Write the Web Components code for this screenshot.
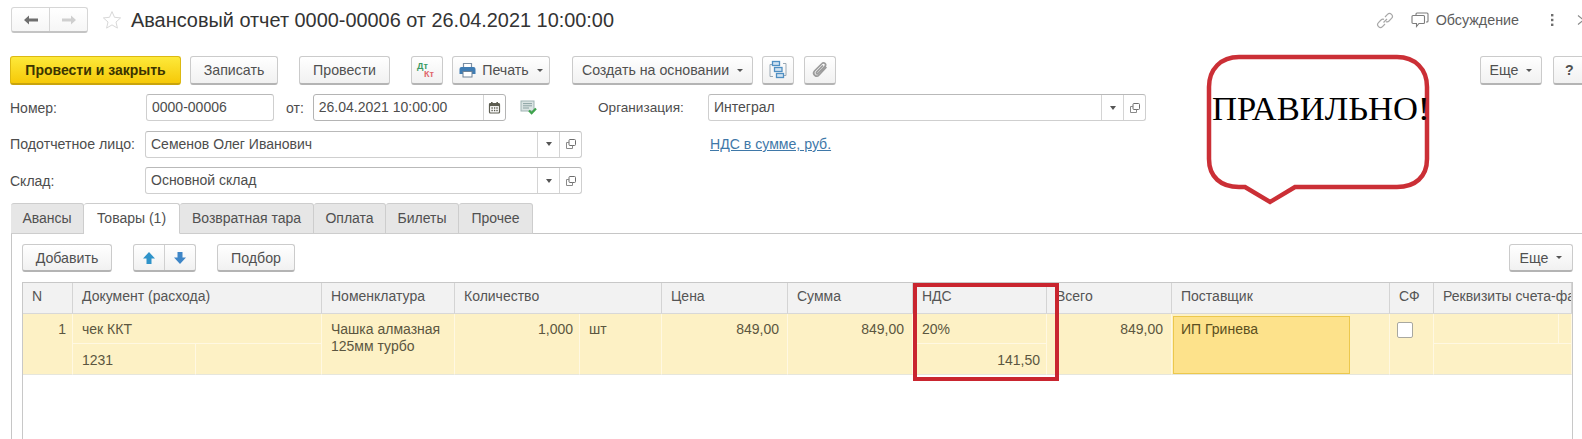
<!DOCTYPE html>
<html lang="ru">
<head>
<meta charset="utf-8">
<title>Авансовый отчет</title>
<style>
html, body { margin: 0; background: #fff; }
body { font-family: "Liberation Sans", Arial, sans-serif; font-size: 13.6px; color: #4d4d4d; }
</style>
</head>
<body>
<doc-page></doc-page>

<script>
const ICONS = {
    back: '<svg width="18" height="12" viewBox="0 0 18 12"><path d="M7 1.5 2 6l5 4.5V7.6h9V4.4H7z" fill="#6e6e6e"/></svg>',
    forward: '<svg width="18" height="12" viewBox="0 0 18 12"><path d="M11 1.5 16 6l-5 4.5V7.6H2V4.4h9z" fill="#cfcfcf"/></svg>',
    star: '<svg width="20" height="20" viewBox="0 0 20 20"><path d="M10 1.6l2.5 5.7 6.1.6-4.6 4.1 1.4 6.1L10 14.9l-5.4 3.2L6 12 1.4 7.9l6.1-.6z" fill="none" stroke="#d8d8d8" stroke-width="1"/></svg>',
    printer: '<svg width="17" height="16" viewBox="0 0 17 16"><path d="M4.5 5V1.5h8V5" fill="#fff" stroke="#7a8ea3" stroke-width="1.2"/><path d="M2.5 5h12a2 2 0 0 1 2 2v5h-16V7a2 2 0 0 1 2-2z" fill="#3f7cb3"/><rect x="4" y="9.5" width="9" height="5.5" fill="#fff" stroke="#6f8296"/></svg>',
    calendar: '<svg width="13" height="13" viewBox="0 0 13 13"><rect x="1.5" y="2.5" width="10" height="9.5" rx="1" fill="#fff" stroke="#5c5c50" stroke-width="1.2"/><rect x="1.5" y="2.5" width="10" height="2.6" fill="#5c5c50"/><rect x="3" y="1" width="1.6" height="2.4" fill="#5c5c50"/><rect x="8.4" y="1" width="1.6" height="2.4" fill="#5c5c50"/><path d="M3.4 7h1.4M5.9 7h1.4M8.3 7h1.4M3.4 9.5h1.4M5.9 9.5h1.4M8.3 9.5h1.4" stroke="#5c5c50" stroke-width="1.3"/></svg>',
    posted: '<svg width="17" height="15" viewBox="0 0 17 15"><rect x="1" y="1" width="13" height="10" fill="#dbe4e3" stroke="#9fb3b3"/><path d="M3 3.6h9M3 5.8h9M3 8h6" stroke="#8ca3a3"/><path d="M9 10.5l2.6 2.6L16 8.4" fill="none" stroke="#3fa34d" stroke-width="2.2"/></svg>',
    structure: '<svg width="18" height="20" viewBox="0 0 18 20"><path d="M3 4.500H1v12h3M14 3.500h3v12h-2" fill="none" stroke="#9aa9b5"/><rect x="3.500" y="1.500" width="7" height="4" fill="#cfe2f1" stroke="#4f8fc2" stroke-width="1.300"/><rect x="5.500" y="7.500" width="7.500" height="4" fill="#cfe2f1" stroke="#4f8fc2" stroke-width="1.300"/><rect x="7.500" y="13.500" width="7" height="4" fill="#cfe2f1" stroke="#4f8fc2" stroke-width="1.300"/></svg>',
    clip: '<svg width="18" height="18" viewBox="0 0 18 18"><path d="M15 6.5 8 14a3 3 0 0 1-4.5-4L11 2.500a2 2 0 0 1 3 2.800L7 12.500a1 1 0 0 1-1.500-1.300L11.500 5" fill="none" stroke="#9c9c9c" stroke-width="1.700" stroke-linecap="round"/></svg>',
    open: '<svg width="12" height="12" viewBox="0 0 12 12"><rect x="4" y="1.500" width="6.500" height="6" rx="1" fill="none" stroke="#6e6e6e"/><path d="M4 4.500H1.500V10.500H7.500V7.500" fill="none" stroke="#8a8a8a"/></svg>',
    link: '<svg width="18" height="17" viewBox="0 0 18 17"><g fill="none" stroke="#a8a8a8" stroke-width="1.200"><path d="M7.500 10.500 11 7"/><path d="M9 5l2.500-2.600a2.800 2.800 0 0 1 4 4L13 9a2.800 2.800 0 0 1-3 .6"/><path d="M9 12l-2.500 2.600a2.800 2.800 0 0 1-4-4L5 8a2.800 2.800 0 0 1 3-.6"/></g></svg>',
    chat: '<svg width="18" height="16" viewBox="0 0 18 16"><g fill="none" stroke="#7d7d7d" stroke-width="1.100"><path d="M5 3V2a1 1 0 0 1 1-1h10a1 1 0 0 1 1 1v7a1 1 0 0 1-1 1h-1"/><path d="M2 3.500h10.500a1 1 0 0 1 1 1v6a1 1 0 0 1-1 1H8l-2.500 3v-3H2a1 1 0 0 1-1-1v-6a1 1 0 0 1 1-1z" fill="#fff"/></g></svg>',
    dots: '<svg width="4" height="14" viewBox="0 0 4 14"><rect x="1" y="1" width="2.400" height="2.400" fill="#6e6e6e"/><rect x="1" y="5.800" width="2.400" height="2.400" fill="#6e6e6e"/><rect x="1" y="10.600" width="2.400" height="2.400" fill="#6e6e6e"/></svg>',
    close: '<svg width="8" height="12" viewBox="0 0 8 12"><path d="M1 1.500 6.500 6 1 10.500" fill="none" stroke="#8a8a8a" stroke-width="1.100"/></svg>',
    up: '<svg width="14" height="14" viewBox="0 0 14 14"><path d="M7 1 13 7.500H9.500V13h-5V7.500H1z" fill="#2f93c9"/></svg>',
    down: '<svg width="14" height="14" viewBox="0 0 14 14"><path d="M7 13 13 6.500H9.500V1h-5v5.500H1z" fill="#3f86c7"/></svg>'
};

const buttonTemplate = document.createElement('template');
buttonTemplate.innerHTML = `
<style>
    :host {
        display: inline-flex;
        box-sizing: border-box;
        height: var(--h, 29px);
        width: var(--w, auto);
        flex: none;
        align-items: center;
        justify-content: center;
        gap: 6px;
        border: 1px solid #cbcbcb;
        border-bottom: 2px solid #b4b4b4;
        border-radius: 3px;
        background: linear-gradient(#ffffff, #f1f1f1);
        color: #505050;
        font-size: 14.2px;
    }
    :host([primary]) {
        background: linear-gradient(#fde93a, #f6c908);
        border-color: #dcb912;
        border-bottom-color: #c9a40c;
        color: #3c3400;
        font-weight: bold;
        font-size: 14px;
    }
    .caret {
        display: none;
        width: 0;
        height: 0;
        border: 3px solid transparent;
        border-top: 3.500px solid #555;
        border-bottom: 0;
        margin-left: 2px;
    }
    :host([menu]) .caret { display: block; }
    svg { display: block; }
</style>
<span id="icon"></span><slot></slot><span class="caret"></span>
`;

class ActionButton extends HTMLElement {
    constructor() {
        super();
        this.attachShadow({ mode: 'open' });
        this.shadowRoot.appendChild(buttonTemplate.content.cloneNode(true));
        const name = this.getAttribute('icon');
        const icon = this.shadowRoot.querySelector('#icon');
        if (name) icon.innerHTML = ICONS[name];
        else icon.remove();
    }
}
customElements.define('action-button', ActionButton);

const fieldTemplate = document.createElement('template');
fieldTemplate.innerHTML = `
<style>
    :host {
        display: flex;
        box-sizing: border-box;
        height: 27px;
        width: var(--w, auto);
        flex: none;
        border: 1px solid #cfcfcf;
        border-top-color: #b9b9b9;
        border-radius: 3px;
        background: #fff;
        color: #4d4d4d;
        font-size: 14px;
    }
    .text {
        flex: 1;
        min-width: 0;
        padding-left: 5px;
        line-height: 25px;
        white-space: nowrap;
        overflow: hidden;
    }
    .part {
        flex: none;
        width: 22px;
        box-sizing: border-box;
        border-left: 1px solid #d4d4d4;
        display: flex;
        align-items: center;
        justify-content: center;
    }
    .drop {
        width: 0;
        height: 0;
        border: 3px solid transparent;
        border-top: 4px solid #555;
        border-bottom: 0;
    }
    svg { display: block; }
</style>
<div class="text"><slot></slot></div>
<span id="parts" style="display:contents"></span>
`;

class InputField extends HTMLElement {
    constructor() {
        super();
        this.attachShadow({ mode: 'open' });
        this.shadowRoot.appendChild(fieldTemplate.content.cloneNode(true));
        const parts = (this.getAttribute('parts') || '').split(' ').filter(Boolean);
        this.shadowRoot.querySelector('#parts').innerHTML = parts.map(p => {
            if (p === 'drop') return '<div class="part"><i class="drop"></i></div>';
            return `<div class="part">${ICONS[p]}</div>`;
        }).join('');
    }
}
customElements.define('input-field', InputField);

const titleTemplate = document.createElement('template');
titleTemplate.innerHTML = `
<style>
    :host {
        display: flex;
        align-items: center;
        height: 26px;
        padding: 7px 0 0 11px;
    }
    .nav {
        display: flex;
        width: 77px;
        height: 26px;
        box-sizing: border-box;
        border: 1px solid #d6d6d6;
        border-bottom: 2px solid #c4c4c4;
        border-radius: 3px;
        background: linear-gradient(#fff, #f6f6f6);
    }
    .nav span { flex: 1; display: flex; align-items: center; justify-content: center; }
    .nav span + span { border-left: 1px solid #d6d6d6; }
    .star { margin-left: 14px; }
    h1 {
        margin: 0 0 0 9px;
        font: 400 19.900px "Liberation Sans", Arial, sans-serif;
        color: #333;
        white-space: nowrap;
    }
    .right {
        margin-left: auto;
        display: flex;
        align-items: center;
        font-size: 14.300px;
        color: #5c5c5c;
        padding-right: 0;
    }
    svg { display: block; }
</style>
<div class="nav"><span id="b"></span><span id="f"></span></div>
<span class="star" id="s"></span>
<h1><slot></slot></h1>
<div class="right">
    <span id="l"></span>
    <span id="c" style="margin-left:17px"></span>
    <span style="margin-left:7px">Обсуждение</span>
    <span id="d" style="margin-left:31px"></span>
    <span id="x" style="margin-left:23px;width:5px;overflow:hidden"></span>
</div>
`;

class TitleBar extends HTMLElement {
    constructor() {
        super();
        this.attachShadow({ mode: 'open' });
        this.shadowRoot.appendChild(titleTemplate.content.cloneNode(true));
        const root = this.shadowRoot;
        root.querySelector('#b').innerHTML = ICONS.back;
        root.querySelector('#f').innerHTML = ICONS.forward;
        root.querySelector('#s').innerHTML = ICONS.star;
        root.querySelector('#l').innerHTML = ICONS.link;
        root.querySelector('#c').innerHTML = ICONS.chat;
        root.querySelector('#d').innerHTML = ICONS.dots;
        root.querySelector('#x').innerHTML = ICONS.close;
    }
}
customElements.define('title-bar', TitleBar);

const tabsTemplate = document.createElement('template');
tabsTemplate.innerHTML = `
<style>
    :host {
        display: flex;
        margin-left: 11px;
        height: 31px;
        box-sizing: border-box;
        border-bottom: 1px solid #c6c6c6;
        font-size: 14px;
        color: #505050;
    }
    div {
        box-sizing: border-box;
        height: 31px;
        line-height: 29px;
        text-align: center;
        background: #e6e6e6;
        border: 1px solid #cdcdcd;
        border-left-width: 0;
        border-radius: 3px 3px 0 0;
    }
    div:first-child { border-left-width: 1px; }
    .on { background: #fff; border-bottom-color: #fff; }
</style>
<div style="width:73px">Авансы</div>
<div class="on" style="width:96px">Товары (1)</div>
<div style="width:134px">Возвратная тара</div>
<div style="width:72px">Оплата</div>
<div style="width:73px">Билеты</div>
<div style="width:74px">Прочее</div>
`;

class TabStrip extends HTMLElement {
    constructor() {
        super();
        this.attachShadow({ mode: 'open' });
        this.shadowRoot.appendChild(tabsTemplate.content.cloneNode(true));
    }
}
customElements.define('tab-strip', TabStrip);

const tableTemplate = document.createElement('template');
tableTemplate.innerHTML = `
<style>
    :host {
        display: block;
        box-sizing: border-box;
        width: 1551px;
        height: 158px;
        margin-left: 11px;
        border: 1px solid #c8c8c8;
        border-bottom: 0;
        overflow: hidden;
        font-size: 14px;
    }
    .grid {
        display: grid;
        grid-template-columns: 50px 123px 126px 133px 125px 82px 126px 125px 134px 125px 218px 44px 138px;
        grid-template-rows: 31px 30px 31px;
    }
    .h, .c {
        box-sizing: border-box;
        white-space: nowrap;
        overflow: hidden;
    }
    .h {
        background: #f2f2f2;
        border-right: 1px solid #d4d4d4;
        border-bottom: 1px solid #d8d8d8;
        color: #555;
        padding-left: 9px;
        line-height: 27px;
    }
    .c {
        background: #fdf1c5;
        border-right: 1px solid #fff8e2;
        border-bottom: 1px solid #fff8e2;
        color: #5b5640;
        padding: 0 8px 0 9px;
        line-height: 30px;
    }
    .last { border-bottom: 1px solid #e6e6dc; }
    .r { text-align: right; }
    .low { line-height: 33px; }
    .tight { padding-right: 6px; }
    .wrap { white-space: normal; line-height: 17px; padding-top: 7px; }
    .sel {
        margin: 2px 0 1px 1px;
        width: 177px;
        height: 58px;
        box-sizing: border-box;
        background: #fde28b;
        border: 1px solid #ecc84d;
        line-height: 25px;
        padding-left: 7px;
        color: #5b4f20;
    }
    .chk {
        display: block;
        width: 16px;
        height: 16px;
        box-sizing: border-box;
        margin: 8px 0 0 7px;
        background: #fff;
        border: 1px solid #a8a8a0;
        border-radius: 2px;
    }
    .sub { height: 100%; width: 124px; border-right: 1px solid #fff8e2; }
</style>
<div class="grid">
    <div class="h" style="grid-column:1">N</div>
    <div class="h" style="grid-column:2/4">Документ (расхода)</div>
    <div class="h" style="grid-column:4">Номенклатура</div>
    <div class="h" style="grid-column:5/7">Количество</div>
    <div class="h" style="grid-column:7">Цена</div>
    <div class="h" style="grid-column:8">Сумма</div>
    <div class="h" style="grid-column:9">НДС</div>
    <div class="h" style="grid-column:10">Всего</div>
    <div class="h" style="grid-column:11">Поставщик</div>
    <div class="h" style="grid-column:12">СФ</div>
    <div class="h" style="grid-column:13">Реквизиты счета-фактуры</div>

    <div class="c r tight last" style="grid-column:1;grid-row:2/4">1</div>
    <div class="c" style="grid-column:2/4;grid-row:2">чек ККТ</div>
    <div class="c low last" style="grid-column:2;grid-row:3">1231</div>
    <div class="c last" style="grid-column:3;grid-row:3"></div>
    <div class="c wrap last" style="grid-column:4;grid-row:2/4">Чашка алмазная<br>125мм турбо</div>
    <div class="c r tight last" style="grid-column:5;grid-row:2/4">1,000</div>
    <div class="c last" style="grid-column:6;grid-row:2/4">шт</div>
    <div class="c r last" style="grid-column:7;grid-row:2/4">849,00</div>
    <div class="c r last" style="grid-column:8;grid-row:2/4">849,00</div>
    <div class="c" style="grid-column:9;grid-row:2">20%</div>
    <div class="c r low tight last" style="grid-column:9;grid-row:3">141,50</div>
    <div class="c r last" style="grid-column:10;grid-row:2/4">849,00</div>
    <div class="c last" style="grid-column:11;grid-row:2/4;padding:0"><div class="sel">ИП Гринева</div></div>
    <div class="c last" style="grid-column:12;grid-row:2/4;padding:0"><i class="chk"></i></div>
    <div class="c" style="grid-column:13;grid-row:2;padding:0"><div class="sub"></div></div>
    <div class="c last" style="grid-column:13;grid-row:3"></div>
</div>
`;

class ExpenseTable extends HTMLElement {
    constructor() {
        super();
        this.attachShadow({ mode: 'open' });
        this.shadowRoot.appendChild(tableTemplate.content.cloneNode(true));
    }
}
customElements.define('expense-table', ExpenseTable);

const calloutTemplate = document.createElement('template');
calloutTemplate.innerHTML = `
<style>
    :host {
        position: absolute;
        left: 1205px;
        top: 53px;
        width: 226px;
        height: 153px;
        display: block;
    }
    svg { position: absolute; inset: 0; }
    span {
        position: absolute;
        left: 7px;
        top: 36px;
        font: 400 34.600px "Liberation Serif", "Times New Roman", serif;
        color: #000;
        white-space: nowrap;
    }
</style>
<svg width="226" height="153" viewBox="0 0 226 153">
    <path d="M34 4H192C210 4 222 16 222 34V106C222 124 210 134 192 134H90L65 149 40 134H34C16 134 4 124 4 106V34C4 16 16 4 34 4Z" fill="#fff" stroke="#cb2f36" stroke-width="4.500" stroke-linejoin="miter"/>
</svg>
<span><slot></slot></span>
`;

class SpeechCallout extends HTMLElement {
    constructor() {
        super();
        this.attachShadow({ mode: 'open' });
        this.shadowRoot.appendChild(calloutTemplate.content.cloneNode(true));
    }
}
customElements.define('speech-callout', SpeechCallout);

const highlightTemplate = document.createElement('template');
highlightTemplate.innerHTML = `
<style>
    :host {
        position: absolute;
        left: 913px;
        top: 283px;
        width: 146px;
        height: 98px;
        box-sizing: border-box;
        border: 4.500px solid #c9252f;
        display: block;
    }
</style>
`;

class HighlightBox extends HTMLElement {
    constructor() {
        super();
        this.attachShadow({ mode: 'open' });
        this.shadowRoot.appendChild(highlightTemplate.content.cloneNode(true));
    }
}
customElements.define('highlight-box', HighlightBox);

const pageTemplate = document.createElement('template');
pageTemplate.innerHTML = `
<style>
    :host {
        display: block;
        position: relative;
        width: 1582px;
        height: 439px;
        overflow: hidden;
        background: #fff;
        font-family: "Liberation Sans", Arial, sans-serif;
        color: #4d4d4d;
    }
    .toolbar {
        display: flex;
        align-items: center;
        margin-top: 23px;
        padding-left: 10px;
    }
    .toolbar .push { margin-left: auto; }
    .dtkt { display: block; width: 20px; font: 700 9px/8px "Liberation Sans", Arial, sans-serif; }
    .dtkt b { display: block; color: #3c9a63; }
    .dtkt i { display: block; font-style: normal; color: #e0666b; padding-left: 7px; }
    .form {
        display: grid;
        grid-template-columns: 135px 437px 126px 438px;
        grid-template-rows: 27px 27px 27px;
        row-gap: 9.500px;
        margin-top: 9px;
        padding-left: 10px;
        align-items: center;
        font-size: 14px;
    }
    .pair { display: flex; align-items: center; }
    .org { padding-left: 16px; font-size: 13.600px; }
    .who { font-size: 14.200px; white-space: nowrap; }
    .link { color: #3f78a8; text-decoration: underline; font-size: 14.100px; padding-left: 2px; }
    .tabs { margin-top: 9px; }
    .panel-bar {
        display: flex;
        margin: 0 9px 0 11px;
        padding: 10px 0 0 10px;
        border-left: 1px solid #c6c6c6;
    }
    .panel-bar .push { margin-left: auto; }
    .table-wrap { margin-left: 11px; padding: 10px 0 0 0; border-left: 1px solid #c6c6c6; }
    .table-wrap expense-table { margin-left: 10px; }
    .arrows {
        display: flex;
        margin: 0 21px;
        width: 63px;
        height: 28px;
        box-sizing: border-box;
        border: 1px solid #cbcbcb;
        border-bottom: 2px solid #b4b4b4;
        border-radius: 3px;
        background: linear-gradient(#fff, #f1f1f1);
    }
    .arrows span { flex: 1; display: flex; align-items: center; justify-content: center; }
    .arrows span + span { border-left: 1px solid #d0d0d0; }
</style>
<title-bar>Авансовый отчет 0000-00006 от 26.04.2021 10:00:00</title-bar>

<div class="toolbar">
    <action-button primary style="--w:171px">Провести и закрыть</action-button>
    <action-button style="--w:88px;margin-left:9px">Записать</action-button>
    <action-button style="--w:91px;margin-left:21px">Провести</action-button>
    <action-button style="--w:32px;margin-left:21px"><span class="dtkt"><b>Дт</b><i>Кт</i></span></action-button>
    <action-button icon="printer" menu style="--w:98px;margin-left:9px">Печать</action-button>
    <action-button menu style="--w:181px;margin-left:22px">Создать на основании</action-button>
    <action-button icon="structure" style="--w:32px;margin-left:9px"></action-button>
    <action-button icon="clip" style="--w:32px;margin-left:10px"></action-button>
    <action-button class="push" menu style="--w:62px">Еще</action-button>
    <action-button style="--w:40px;margin:0 -11px 0 11px;font-weight:bold;justify-content:flex-start;padding-left:11px">?</action-button>
</div>

<div class="form">
    <span>Номер:</span>
    <div class="pair">
        <input-field style="--w:128px;margin-left:1px">0000-00006</input-field>
        <span style="margin-left:12px">от:</span>
        <input-field style="--w:193px;margin-left:9px;border-color:#b4b4b4" parts="calendar">26.04.2021 10:00:00</input-field>
        <span id="posted" style="margin-left:14px;display:block;height:15px"></span>
    </div>
    <span class="org">Организация:</span>
    <input-field parts="drop open">Интеграл</input-field>

    <span class="who">Подотчетное лицо:</span>
    <input-field parts="drop open">Семенов Олег Иванович</input-field>
    <span></span>
    <span class="link">НДС в сумме, руб.</span>

    <span>Склад:</span>
    <input-field parts="drop open">Основной склад</input-field>
</div>

<tab-strip class="tabs"></tab-strip>

<div class="panel-bar">
    <action-button style="--w:90px;--h:28px">Добавить</action-button>
    <div class="arrows"><span id="up"></span><span id="down"></span></div>
    <action-button style="--w:78px;--h:28px">Подбор</action-button>
    <action-button class="push" menu style="--w:64px;--h:28px">Еще</action-button>
</div>

<div class="table-wrap"><expense-table></expense-table></div>

<highlight-box></highlight-box>
<speech-callout>ПРАВИЛЬНО!</speech-callout>
`;

class DocPage extends HTMLElement {
    constructor() {
        super();
        this.attachShadow({ mode: 'open' });
        this.shadowRoot.appendChild(pageTemplate.content.cloneNode(true));
        this.shadowRoot.querySelector('#posted').innerHTML = ICONS.posted;
        this.shadowRoot.querySelector('#up').innerHTML = ICONS.up;
        this.shadowRoot.querySelector('#down').innerHTML = ICONS.down;
    }
}
customElements.define('doc-page', DocPage);
</script>
</body>
</html>
